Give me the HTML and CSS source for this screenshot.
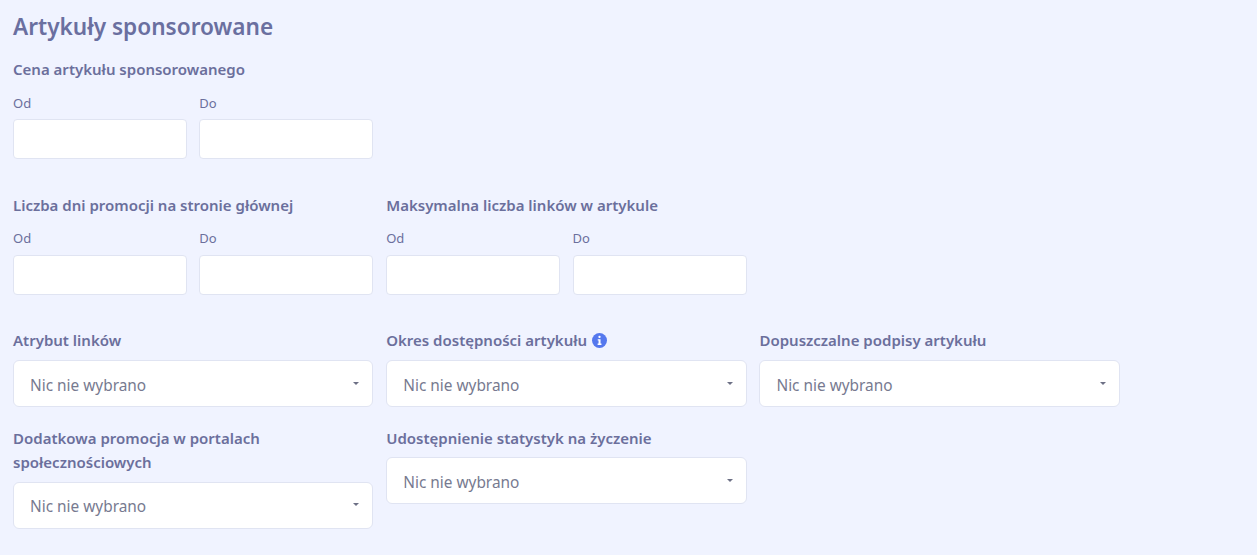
FILE: index.html
```html
<!DOCTYPE html>
<html lang="pl">
<head>
<meta charset="utf-8">
<title>Artykuły sponsorowane</title>
<link rel="stylesheet" href="styles.css">
</head>
<body>
<h2 class="title">Artykuły sponsorowane</h2>
<div class="row row-first">
  <div class="col">
    <div class="label">Cena artykułu sponsorowanego</div>
    <div class="range">
      <div class="field"><span class="sub">Od</span><input class="input" type="text"></div>
      <div class="field"><span class="sub">Do</span><input class="input" type="text"></div>
    </div>
  </div>
</div>
<div class="row row-second">
  <div class="col">
    <div class="label">Liczba dni promocji na stronie głównej</div>
    <div class="range">
      <div class="field"><span class="sub">Od</span><input class="input" type="text"></div>
      <div class="field"><span class="sub">Do</span><input class="input" type="text"></div>
    </div>
  </div>
  <div class="col">
    <div class="label">Maksymalna liczba linków w artykule</div>
    <div class="range">
      <div class="field"><span class="sub">Od</span><input class="input" type="text"></div>
      <div class="field"><span class="sub">Do</span><input class="input" type="text"></div>
    </div>
  </div>
</div>
<div class="row row-third">
  <div class="col">
    <div class="label">Atrybut linków</div>
    <div class="select"><span class="select-text">Nic nie wybrano</span><i class="caret"></i></div>
  </div>
  <div class="col">
    <div class="label">Okres dostępności artykułu
      <svg class="info" viewBox="0 0 16 16" width="15" height="15"><circle cx="8" cy="8" r="8" fill="#5578ee"/><rect x="6.8" y="3" width="2.4" height="2.3" rx="1" fill="#fff"/><path d="M6.1 6.6h3v4.7h1v1.4H6v-1.4h1V8H6.1z" fill="#fff"/></svg>
    </div>
    <div class="select"><span class="select-text">Nic nie wybrano</span><i class="caret"></i></div>
  </div>
  <div class="col">
    <div class="label">Dopuszczalne podpisy artykułu</div>
    <div class="select"><span class="select-text">Nic nie wybrano</span><i class="caret"></i></div>
  </div>
</div>
<div class="row row-fourth">
  <div class="col">
    <div class="label">Dodatkowa promocja w portalach społecznościowych</div>
    <div class="select"><span class="select-text">Nic nie wybrano</span><i class="caret"></i></div>
  </div>
  <div class="col">
    <div class="label">Udostępnienie statystyk na życzenie</div>
    <div class="select"><span class="select-text">Nic nie wybrano</span><i class="caret"></i></div>
  </div>
</div>
</body>
</html>
```
FILE: styles.css
```css
* { box-sizing: border-box; }
html, body { margin: 0; height: 100%; }
body {
  background: #f0f3ff;
  padding: 12px 13px 0;
  font-family: "Noto Sans", "Open Sans", sans-serif;
  color: #6b6f9c;
  overflow: hidden;
}
.title {
  margin: 0;
  font-size: 22.6px;
  line-height: 30px;
  font-weight: 600;
  color: #6a6fa0;
}
.row { display: flex; gap: 12.9px; }
.row-first { margin-top: 15px; }
.row-second { margin-top: 33.3px; }
.row-second .range { margin-top: 12.1px; }
.row-third { margin-top: 33.8px; }
.row-fourth { margin-top: 18.4px; }
.col { width: 360.33px; }
.label {
  font-size: 15px;
  line-height: 24.4px;
  font-weight: 600;
  color: #6b6f9c;
}
.range { display: flex; justify-content: space-between; margin-top: 12.6px; }
.field { width: 174px; }
.sub {
  display: block;
  font-size: 13px;
  line-height: 18px;
  color: #6b6f9c;
  margin-bottom: 7.4px;
}
.input {
  display: block;
  width: 100%;
  height: 40px;
  background: #fff;
  border: 1px solid #e0e4f2;
  border-radius: 4px;
}
.select {
  display: flex;
  align-items: center;
  justify-content: space-between;
  height: 47px;
  margin-top: 7.4px;
  padding: 0 16px;
  background: #fff;
  border: 1px solid #e0e4f2;
  border-radius: 6px;
  font-size: 15.4px;
  color: #777a90;
}
.select-text { padding-top: 3px; }
.caret {
  width: 0;
  height: 0;
  margin-top: -1px;
  margin-right: -3px;
  border-left: 3.5px solid transparent;
  border-right: 3.5px solid transparent;
  border-top: 3.5px solid #6d7085;
}
.info { vertical-align: -2px; margin-left: 1px; }
```
